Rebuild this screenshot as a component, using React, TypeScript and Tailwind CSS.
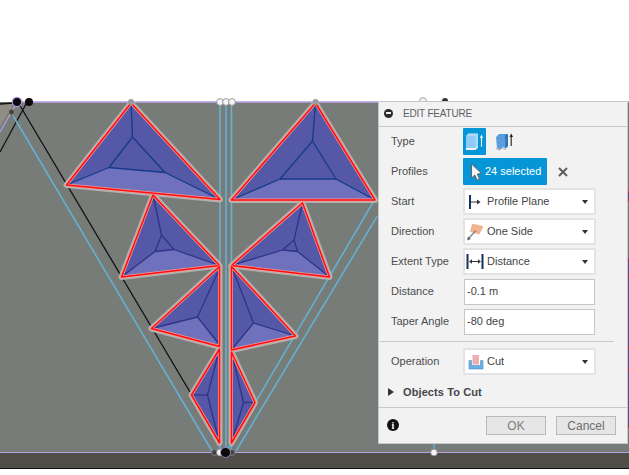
import type { ReactNode } from 'react'

type Pt = [number, number]
type Shard = { outline: Pt[]; light: Pt[]; lines: [Pt, Pt][]; ink: string }

function link(points: Pt[]) {
  return points.map(p => p.join(',')).join(' ')
}

// builds a shard with an inner triangle, last outline edge is the light face
function faceted(a: Pt, b: Pt, c: Pt, ia: Pt, ib: Pt, ic: Pt, ink: string): Shard {
  return {
    outline: [a, b, c],
    light: [b, c, ic, ib],
    lines: [[a, ia], [b, ib], [c, ic], [ia, ib], [ib, ic], [ic, ia]],
    ink
  }
}

const shards: Shard[] = [
  faceted([131, 103], [66.5, 185], [220, 199.5], [132.5, 137], [109, 167.5], [165, 172.5], '#143a8c'),
  faceted([315.5, 103], [231.5, 200], [375, 200], [312.5, 141], [280, 179], [336, 179], '#143a8c'),
  faceted([153, 195], [121.5, 277], [219.5, 265.5], [161.5, 235], [155, 251.5], [174, 249.5], '#2e3488'),
  faceted([302.5, 203], [231.5, 265.5], [329.5, 277], [294, 240], [282.5, 250], [297.5, 251.5], '#2e3488'),
  {
    outline: [[219.5, 266.5], [151.5, 328.5], [219.5, 346.5]],
    light: [[151.5, 328.5], [219.5, 346.5], [197.5, 317]],
    lines: [[[218, 272], [197.5, 317]], [[197.5, 317], [151.5, 328.5]], [[197.5, 317], [219, 344]]],
    ink: '#2e3488'
  },
  {
    outline: [[231.5, 266.5], [295.5, 336], [231.5, 350]],
    light: [[295.5, 336], [231.5, 350], [253.5, 323]],
    lines: [[[233, 270], [253.5, 323]], [[253.5, 323], [295.5, 336]], [[253.5, 323], [233, 348]]],
    ink: '#2e3488'
  },
  {
    outline: [[219.5, 349], [191.5, 395], [219.5, 443]],
    light: [],
    lines: [[[217.5, 357], [207.5, 395]], [[207.5, 395], [192, 395]], [[207.5, 395], [218, 437]]],
    ink: '#2e3488'
  },
  {
    outline: [[231.5, 352], [255, 402.5], [231.5, 443]],
    light: [],
    lines: [[[233, 358], [243.5, 402.5]], [[243.5, 402.5], [254, 402.5]], [[243.5, 402.5], [233, 438]]],
    ink: '#2e3488'
  }
]

const blueLines: [number, number, number, number][] = [
  [13.5, 116.5, 212, 451],
  [220, 102, 220, 452],
  [226, 102, 226, 452],
  [231.5, 102, 231.5, 452],
  [376.5, 196.5, 228, 449],
  [377, 216.5, 236, 451],
  [434, 440, 434, 452]
]

function Model() {
  return (
    <svg viewBox="0 0 629 475" className="absolute inset-0 h-[475px] w-[629px]">
      <polygon points="0,104 13,104 0,127" fill="#8f8e84" />
      <line x1="0" y1="104" x2="14" y2="103" stroke="#111" strokeWidth="1.3" />
      <line x1="16" y1="104" x2="0" y2="132" stroke="#b79ce0" strokeWidth="1.3" />
      <line x1="26" y1="104" x2="0" y2="152" stroke="#111" strokeWidth="1.3" />
      <line x1="19" y1="104" x2="190" y2="392" stroke="#111" strokeWidth="1.3" />
      <line x1="17" y1="102" x2="629" y2="102" stroke="#b99fe3" strokeWidth="1.4" />
      <line x1="0" y1="452.5" x2="629" y2="452.5" stroke="#b99fe3" strokeWidth="1.2" />
      {blueLines.map(([x1, y1, x2, y2]) => (
        <line key={`${x1}-${y1}`} x1={x1} y1={y1} x2={x2} y2={y2} stroke="#63b3d6" strokeWidth="1.5" />
      ))}
      {shards.map(shard => (
        <polygon key={link(shard.outline)} points={link(shard.outline)} fill="none" stroke="#b2afac" strokeWidth="6" strokeLinejoin="round" />
      ))}
      {shards.map(shard => (
        <g key={link(shard.outline)}>
          <polygon points={link(shard.outline)} fill="#5558a6" />
          {shard.light.length > 0 && <polygon points={link(shard.light)} fill="#7071bc" />}
          {shard.lines.map(([from, to]) => (
            <line key={link([from, to])} x1={from[0]} y1={from[1]} x2={to[0]} y2={to[1]} stroke={shard.ink} strokeWidth="1.3" />
          ))}
          <polygon points={link(shard.outline)} fill="none" stroke="#f09c9c" strokeWidth="3" strokeLinejoin="round" />
          <polygon points={link(shard.outline)} fill="none" stroke="#ff0d0d" strokeWidth="1.5" strokeLinejoin="round" />
        </g>
      ))}
      <circle cx="131" cy="102" r="3" fill="#9a9a98" />
      <circle cx="315.5" cy="102" r="3" fill="#9a9a98" />
      {[220, 226, 232].map(x => (
        <circle key={x} cx={x} cy="102" r="3.4" fill="#f4f4f4" stroke="#8a8a8a" strokeWidth="0.8" />
      ))}
      <circle cx="423" cy="101" r="3.4" fill="#f4f4f4" stroke="#8a8a8a" strokeWidth="0.8" />
      <circle cx="445" cy="101" r="3" fill="#333" />
      <circle cx="11.5" cy="112" r="3" fill="#444" stroke="#8d8d88" strokeWidth="1" />
      <circle cx="17" cy="102" r="4.6" fill="#0a0a0a" stroke="#b08fe6" strokeWidth="1.2" />
      <circle cx="29" cy="102" r="4" fill="#0a0a0a" />
      <circle cx="214.5" cy="452.5" r="3" fill="#444" stroke="#8d8d88" strokeWidth="0.8" />
      <circle cx="232" cy="452.5" r="3" fill="#444" stroke="#8d8d88" strokeWidth="0.8" />
      <circle cx="220" cy="452.5" r="3.4" fill="#f4f4f4" stroke="#8a8a8a" strokeWidth="0.8" />
      <circle cx="225.5" cy="452.5" r="5" fill="#0a0a0a" stroke="#b08fe6" strokeWidth="0.8" />
      <circle cx="434" cy="452.5" r="3.4" fill="#f4f4f4" stroke="#777" strokeWidth="0.8" />
      <line x1="628.5" y1="258" x2="628.5" y2="428" stroke="#4a4fa6" strokeWidth="1" />
      <line x1="628.5" y1="192" x2="628.5" y2="201" stroke="#4a4fa6" strokeWidth="1" />
      {[192, 200, 261, 277, 348, 370, 427].map(y => (
        <line key={y} x1="628" y1={y} x2="629" y2={y} stroke="#ff1010" strokeWidth="1.5" />
      ))}
    </svg>
  )
}

function Row({ label, children }: { label: string; children: ReactNode }) {
  return (
    <div className="flex h-[27px] items-center pl-3">
      <span className="w-[72px] shrink-0 text-[11px] text-[#4c4c4c]">{label}</span>
      {children}
    </div>
  )
}

function Select({ icon, value }: { icon: ReactNode; value: string }) {
  return (
    <div className="flex h-[27px] w-[133px] items-center rounded-[2px] border-2 border-[#e3e3e3] bg-white pr-[6px] text-[11px] text-[#444]">
      <span className="flex w-[22px] shrink-0 justify-center">{icon}</span>
      <span className="flex-1">{value}</span>
      <span className="h-0 w-0 border-x-[3.5px] border-t-[4px] border-x-transparent border-t-[#333]" />
    </div>
  )
}

function NumberField({ value }: { value: string }) {
  return (
    <div className="ml-px flex h-[26px] w-[131px] items-center border border-[#c6c6c6] bg-white pl-[2px] text-[11px] text-[#444]">
      {value}
    </div>
  )
}

function StartIcon() {
  return (
    <svg width="18" height="18" viewBox="0 0 18 18">
      <rect x="2" y="2" width="2" height="14" fill="#13305f" />
      <path d="M4 9h8" stroke="#333" strokeWidth="1" />
      <path d="M10 6.5 13.500 9 10 11.500z" fill="#333" />
    </svg>
  )
}

function DirectionIcon() {
  return (
    <svg width="20" height="20" viewBox="0 0 20 20">
      <path d="M6.500 2 17 4.500 13 12 4.500 9.500z" fill="#f2b48e" stroke="#dd9c72" strokeWidth="0.5" />
      <path d="M10 8.500 3 16" stroke="#808080" strokeWidth="1.200" />
      <path d="M1 18.500 2 14.500 5 17z" fill="#666" />
    </svg>
  )
}

function ExtentIcon() {
  return (
    <svg width="20" height="18" viewBox="0 0 20 18">
      <rect x="0.500" y="1" width="2" height="15" fill="#13305f" />
      <rect x="15.500" y="1" width="2" height="15" fill="#13305f" />
      <path d="M4 8.500h10" stroke="#333" strokeWidth="1" />
      <path d="M3 8.500 6 6.300v4.400zM15 8.500 12 6.300v4.400z" fill="#333" />
    </svg>
  )
}

function CutIcon() {
  return (
    <svg width="16" height="16" viewBox="0 0 16 16">
      <path d="M1 6.500V15h14V6.500h-2.500v5h-9v-5z" fill="#6db0e4" stroke="#4f8fc7" strokeWidth="0.6" />
      <rect x="4.500" y="1" width="6.500" height="9.500" fill="#efaeb0" />
    </svg>
  )
}

function SolidIcon() {
  return (
    <svg width="20" height="20" viewBox="0 0 20 20">
      <path d="M1 16V4l2.500-2.500h9.500v11.500L10.500 16z" fill="#8ecbf6" />
      <path d="M10.500 4H1l2.500-2.500H13zM10.500 4v12l2.500-2.500v-12z" fill="#b6e0fb" opacity="0.7" />
      <path d="M1 16h9.500l2.500-2.500v2L10.500 18H1z" fill="#f2f7fa" />
      <path d="M16.500 14.500V4" stroke="#fff" strokeWidth="1.100" />
      <path d="M15 6 16.500 2.500 18 6z" fill="#fff" />
    </svg>
  )
}

function ThinIcon() {
  return (
    <svg width="19" height="20" viewBox="0 0 19 20">
      <path d="M1 5 4 2h9v12l-2 2.500c-1.500 0-1.800-1.500-3-1.500s-1.800 2.500-3 2.500c-1 0-1.500-1.500-3-1.500z" fill="#5a9ede" />
      <path d="M10 2.500h3V14l-2.500 2.500z" fill="#2f74b8" />
      <path d="M1 16.500c1.500 0 2 1.500 3 1.500s2-2 3.500-2 1.800 1.500 3 1.500" stroke="#9a9a9a" fill="none" strokeWidth="1" />
      <path d="M16.200 14V3" stroke="#222" strokeWidth="1.100" />
      <path d="M14.500 5 16.200 1.500 18 5z" fill="#222" />
    </svg>
  )
}

function Panel() {
  return (
    <div className="absolute top-[101px] left-[378px] flex h-[343px] w-[250px] flex-col border border-[#c8c8c8] bg-[#f2f2f2]">
      <div className="flex h-[25px] shrink-0 items-center gap-[10px] border-b border-[#c8c8c8] pb-[2px] pl-[5px]">
        <span className="flex h-[9px] w-[9px] items-center justify-center rounded-full bg-[#2a2a2a]">
          <span className="h-[2px] w-[5px] bg-[#f2f2f2]" />
        </span>
        <span className="text-[10px] tracking-[-0.2px] text-[#5c6066]">EDIT FEATURE</span>
      </div>
      <div className="flex flex-col gap-[3px] pt-px">
        <Row label="Type">
          <span className="flex h-[27px] w-[23px] items-center justify-center rounded-[1px] bg-[#0696d7]">
            <SolidIcon />
          </span>
          <span className="ml-[9px]">
            <ThinIcon />
          </span>
        </Row>
        <Row label="Profiles">
          <span className="flex h-[27px] w-[84px] items-center rounded-[1px] bg-[#0696d7] pl-[7px] text-[11px] text-white">
            <svg width="13" height="18" viewBox="0 0 13 18" className="mr-[2px]">
              <path d="M1.500 1V15L4.800 12 7 17 9.500 16 7.300 11 11.500 10.500z" fill="#f4f4f4" stroke="#666" strokeWidth="1" />
            </svg>
            24 selected
          </span>
          <svg width="10" height="10" viewBox="0 0 10 10" className="ml-[11px]">
            <path d="M1 1 9 9M9 1 1 9" stroke="#5d5d5d" strokeWidth="2" />
          </svg>
        </Row>
        <Row label="Start">
          <Select icon={<StartIcon />} value="Profile Plane" />
        </Row>
        <Row label="Direction">
          <Select icon={<DirectionIcon />} value="One Side" />
        </Row>
        <Row label="Extent Type">
          <Select icon={<ExtentIcon />} value="Distance" />
        </Row>
        <Row label="Distance">
          <NumberField value="-0.1 m" />
        </Row>
        <Row label="Taper Angle">
          <NumberField value="-80 deg" />
        </Row>
      </div>
      <div className="mt-[6px] mr-[13px] ml-px h-px shrink-0 bg-[#c8c8c8]" />
      <div className="mt-[6px]">
        <Row label="Operation">
          <Select icon={<CutIcon />} value="Cut" />
        </Row>
      </div>
      <div className="mt-[5px] flex h-[24px] items-center pl-[9px]">
        <span className="h-0 w-0 border-y-[4.5px] border-l-[6px] border-y-transparent border-l-[#333]" />
        <span className="ml-[9px] text-[11px] font-bold tracking-[0.1px] text-[#44464a]">Objects To Cut</span>
      </div>
      <div className="mt-[3px] h-px shrink-0 bg-[#c8c8c8]" />
      <div className="flex flex-1 items-center pr-[11px] pb-[1px] pl-[8px]">
        <span className="flex h-[12px] w-[12px] items-center justify-center rounded-full bg-[#111] font-['Liberation_Serif',serif] text-[10px] font-bold text-white">
          i
        </span>
        <button className="ml-auto h-[19px] w-[60px] border border-[#b9b9b9] bg-[#e6e6e6] text-[12px] text-[#7d7d7d]">OK</button>
        <button className="ml-[10px] h-[19px] w-[60px] border border-[#b9b9b9] bg-[#e6e6e6] text-[12px] text-[#6d6d6d]">Cancel</button>
      </div>
    </div>
  )
}

export default function App() {
  return (
    <div className="relative h-[475px] w-[629px] overflow-hidden bg-white font-['Liberation_Sans',Arial,sans-serif]">
      <div className="h-[102px]" />
      <div className="h-[351px] bg-[#787c78]" />
      <div className="h-[16px] border-b border-[#111] bg-[#4f4e49]" />
      <Model />
      <Panel />
    </div>
  )
}
